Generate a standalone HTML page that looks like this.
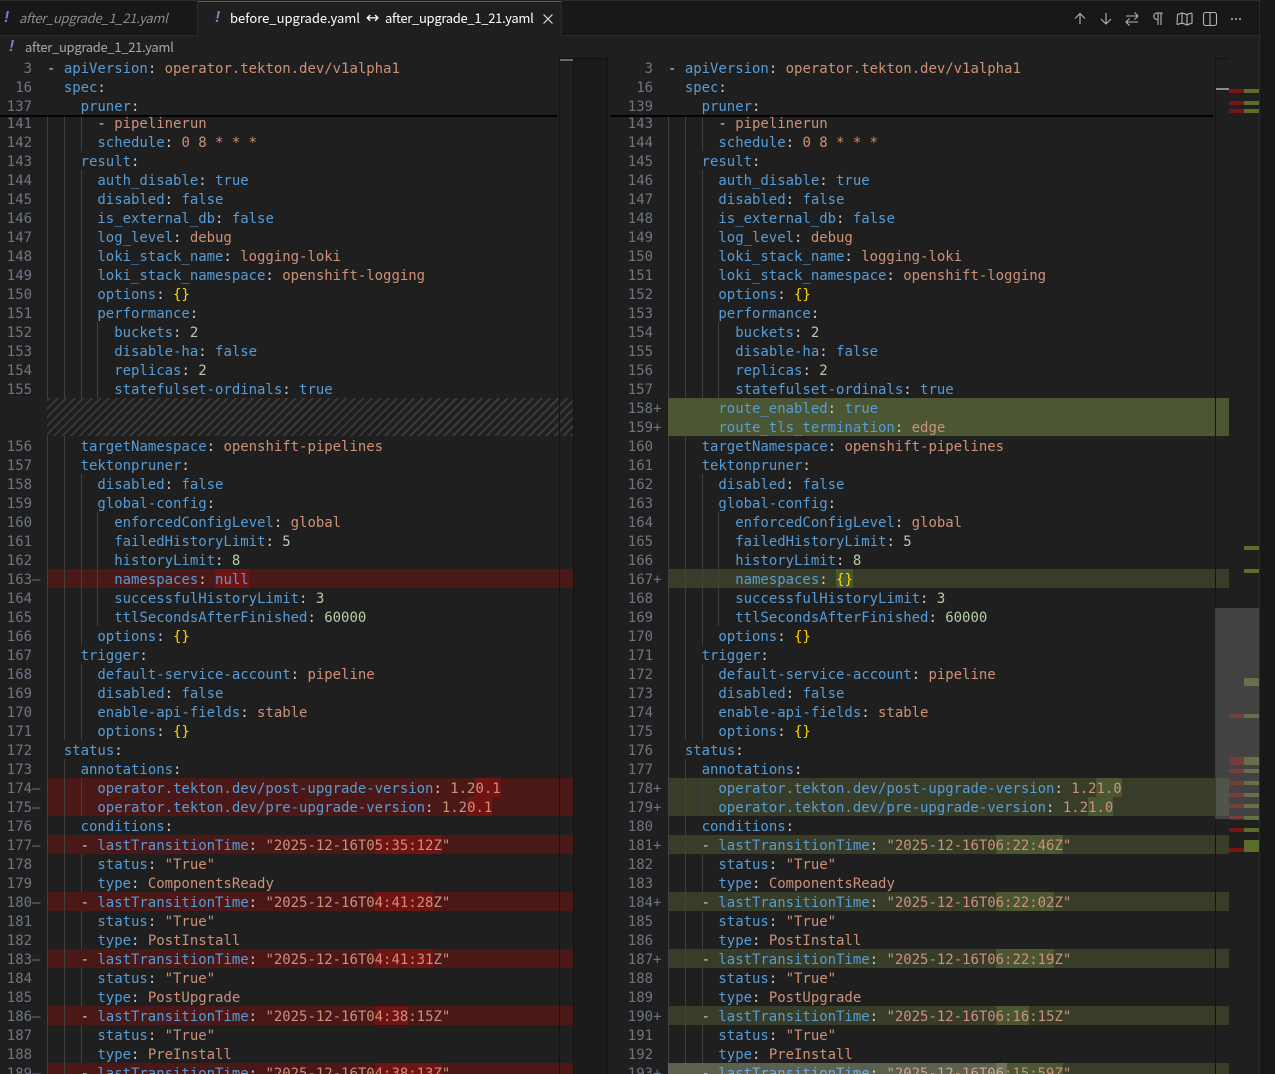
<!DOCTYPE html>
<html><head><meta charset="utf-8"><style>
html,body{margin:0;padding:0;background:#1f1f1f;width:1275px;height:1074px;overflow:hidden}
.abs,.pane,.bar{position:absolute}
#tabs{left:0;top:0;width:1259px;background:#181818;border-bottom:1px solid #2b2b2b;position:absolute;border-top:1px solid #2b2b2b;box-sizing:content-box;height:34px}
.ui{font:13px "Noto Sans CJK SC","Liberation Sans",sans-serif;white-space:pre;position:absolute;line-height:18px}
.nr{letter-spacing:-.3px}
.ex{position:absolute;color:#9b6fc4;font:italic bold 16px "Liberation Sans",sans-serif;line-height:18px}
.pane{top:113px;height:961px;overflow:hidden;font:14px/23px "DejaVu Sans Mono",monospace;letter-spacing:-.028px;color:#ccc}
.stick{position:absolute;top:58px;height:57px;overflow:hidden;background:#1f1f1f;font:14px/23px "DejaVu Sans Mono",monospace;letter-spacing:-.028px;color:#ccc}
.l{position:relative;height:19px;margin-left:47px;white-space:pre}
.l i{position:absolute;left:-47px;width:32px;text-align:right;color:#6e7681;font-style:normal}
.l em{position:absolute;left:-15px;color:#6e7681;font-style:normal}
.k{color:#569cd6}.s{color:#ce9178}.n{color:#b5cea8}.y{color:#ffd700}
.r{background-color:#4b1818}.a{background-color:#373d29}.A{background-color:#4b5632}
.R,.G{display:inline-block;height:19px;vertical-align:top}
.R{background:#6f1313}.G{background:#4b5632}
.g1,.g2,.g3,.g4{background-repeat:no-repeat;background-size:1px 19px}
.g1{background-image:linear-gradient(#404040,#404040);background-position:0 0}
.g2{background-image:linear-gradient(#404040,#404040),linear-gradient(#404040,#404040);background-position:0 0,17px 0}
.g3{background-image:linear-gradient(#404040,#404040),linear-gradient(#404040,#404040),linear-gradient(#404040,#404040);background-position:0 0,17px 0,34px 0}
.g4{background-image:linear-gradient(#404040,#404040),linear-gradient(#404040,#404040),linear-gradient(#404040,#404040),linear-gradient(#404040,#404040);background-position:0 0,17px 0,34px 0,50px 0}
.hatch{height:38px;margin-left:47px;background:repeating-linear-gradient(-45deg,#3a3a3a 0,#3a3a3a 2px,#1f1f1f 2px,#1f1f1f 6px)}
.bar{display:block}
.sh{position:absolute;top:115px;height:3px;background:linear-gradient(#000,#000 45%,rgba(0,0,0,.25) 70%,transparent)}
</style></head><body>
<div id="tabs"></div>
<div class="bar" style="left:197px;top:0;width:365px;height:36px;background:#1f1f1f;border-left:1px solid #2b2b2b;border-right:1px solid #2b2b2b;box-sizing:border-box"></div>
<div class="bar" style="left:198px;top:1px;width:363px;height:1px;background:#0078d4"></div>
<div class="bar" style="left:1259px;top:0;width:16px;height:1074px;background:#181818;border-left:1px solid #2b2b2b;box-sizing:border-box"></div>
<span class="ex" style="left:4px;top:9px">!</span>
<span class="ui nr" style="left:19px;top:9px;color:#8c8c8c;font-style:italic">after_upgrade_1_21.yaml</span>
<span class="ex" style="left:215px;top:9px">!</span>
<span class="ui" style="left:230px;top:9px;color:#ffffff">before_upgrade.yaml</span>
<span class="ui" style="left:366px;top:9px;color:#ffffff;font-family:'DejaVu Sans',sans-serif;font-size:16px">↔</span>
<span class="ui nr" style="left:385px;top:9px;color:#ffffff">after_upgrade_1_21.yaml</span>
<svg class="abs" style="left:541px;top:12px" width="14" height="14" viewBox="0 0 14 14"><path d="M2.5 2.5l9 9M11.5 2.5l-9 9" stroke="#ddd" stroke-width="1.2" fill="none"/></svg>
<span class="ex" style="left:9px;top:38px">!</span>
<span class="ui nr" style="left:25px;top:38px;color:#a9a9a9">after_upgrade_1_21.yaml</span>
<svg class="abs" style="left:1070px;top:9px" width="180" height="20" viewBox="0 0 180 20" fill="none" stroke="#b5b5b5" stroke-width="1.1">
<path d="M10 15V4.500M5 9.500l5-5 5 5"/>
<path d="M36 4v11M31 10l5 5 5-5"/>
<path d="M56 7h12M64.500 3.500L68 7l-3.500 3.500M68 13H56M59.500 9.500L56 13l3.500 3.500"/>
<path d="M91 4v12M88 4v12M93 4h-6a3.200 3.200 0 0 0 0 6.500h1"/>
<path d="M107.500 5.500l4.500-1.500 5 1.500 4.500-1.500.5.500v9.500l-5 2-5-2-4.500 1.500-.5-.5zM112 4v11M117 5.500v10.500"/>
<rect x="133.500" y="3.500" width="13" height="13" rx="2"/><path d="M140 3.500v13"/>
<path d="M161 10h2M165 10h2M169 10h2" stroke-width="1.500"/>
</svg>

<div class="pane" style="left:0;width:573px">
<div class="l g3"><i>141</i>      - <span class="s">pipelinerun</span></div>
<div class="l g3"><i>142</i>      <span class="k">schedule</span>: <span class="s">0 8 * * *</span></div>
<div class="l g2"><i>143</i>    <span class="k">result</span>:</div>
<div class="l g3"><i>144</i>      <span class="k">auth_disable</span>: <span class="k">true</span></div>
<div class="l g3"><i>145</i>      <span class="k">disabled</span>: <span class="k">false</span></div>
<div class="l g3"><i>146</i>      <span class="k">is_external_db</span>: <span class="k">false</span></div>
<div class="l g3"><i>147</i>      <span class="k">log_level</span>: <span class="s">debug</span></div>
<div class="l g3"><i>148</i>      <span class="k">loki_stack_name</span>: <span class="s">logging-loki</span></div>
<div class="l g3"><i>149</i>      <span class="k">loki_stack_namespace</span>: <span class="s">openshift-logging</span></div>
<div class="l g3"><i>150</i>      <span class="k">options</span>: <span class="y">{}</span></div>
<div class="l g3"><i>151</i>      <span class="k">performance</span>:</div>
<div class="l g4"><i>152</i>        <span class="k">buckets</span>: <span class="n">2</span></div>
<div class="l g4"><i>153</i>        <span class="k">disable-ha</span>: <span class="k">false</span></div>
<div class="l g4"><i>154</i>        <span class="k">replicas</span>: <span class="n">2</span></div>
<div class="l g4"><i>155</i>        <span class="k">statefulset-ordinals</span>: <span class="k">true</span></div>
<div class="hatch"></div>
<div class="l g2"><i>156</i>    <span class="k">targetNamespace</span>: <span class="s">openshift-pipelines</span></div>
<div class="l g2"><i>157</i>    <span class="k">tektonpruner</span>:</div>
<div class="l g3"><i>158</i>      <span class="k">disabled</span>: <span class="k">false</span></div>
<div class="l g3"><i>159</i>      <span class="k">global-config</span>:</div>
<div class="l g4"><i>160</i>        <span class="k">enforcedConfigLevel</span>: <span class="s">global</span></div>
<div class="l g4"><i>161</i>        <span class="k">failedHistoryLimit</span>: <span class="n">5</span></div>
<div class="l g4"><i>162</i>        <span class="k">historyLimit</span>: <span class="n">8</span></div>
<div class="l g4 r"><i>163</i><em>—</em>        <span class="k">namespaces</span>: <span class="R k">null</span></div>
<div class="l g4"><i>164</i>        <span class="k">successfulHistoryLimit</span>: <span class="n">3</span></div>
<div class="l g4"><i>165</i>        <span class="k">ttlSecondsAfterFinished</span>: <span class="n">60000</span></div>
<div class="l g3"><i>166</i>      <span class="k">options</span>: <span class="y">{}</span></div>
<div class="l g2"><i>167</i>    <span class="k">trigger</span>:</div>
<div class="l g3"><i>168</i>      <span class="k">default-service-account</span>: <span class="s">pipeline</span></div>
<div class="l g3"><i>169</i>      <span class="k">disabled</span>: <span class="k">false</span></div>
<div class="l g3"><i>170</i>      <span class="k">enable-api-fields</span>: <span class="s">stable</span></div>
<div class="l g3"><i>171</i>      <span class="k">options</span>: <span class="y">{}</span></div>
<div class="l g1"><i>172</i>  <span class="k">status</span>:</div>
<div class="l g2"><i>173</i>    <span class="k">annotations</span>:</div>
<div class="l g3 r"><i>174</i><em>—</em>      <span class="k">operator.tekton.dev/post-upgrade-version</span>: <span class="s">1.2<span class="R">0.1</span></span></div>
<div class="l g3 r"><i>175</i><em>—</em>      <span class="k">operator.tekton.dev/pre-upgrade-version</span>: <span class="s">1.2<span class="R">0.1</span></span></div>
<div class="l g2"><i>176</i>    <span class="k">conditions</span>:</div>
<div class="l g2 r"><i>177</i><em>—</em>    - <span class="k">lastTransitionTime</span>: <span class="s">"2025-12-16T0<span class="R">5:35:12Z</span>"</span></div>
<div class="l g3"><i>178</i>      <span class="k">status</span>: <span class="s">"True"</span></div>
<div class="l g3"><i>179</i>      <span class="k">type</span>: <span class="s">ComponentsReady</span></div>
<div class="l g2 r"><i>180</i><em>—</em>    - <span class="k">lastTransitionTime</span>: <span class="s">"2025-12-16T0<span class="R">4:41:28</span>Z"</span></div>
<div class="l g3"><i>181</i>      <span class="k">status</span>: <span class="s">"True"</span></div>
<div class="l g3"><i>182</i>      <span class="k">type</span>: <span class="s">PostInstall</span></div>
<div class="l g2 r"><i>183</i><em>—</em>    - <span class="k">lastTransitionTime</span>: <span class="s">"2025-12-16T0<span class="R">4:41:31</span>Z"</span></div>
<div class="l g3"><i>184</i>      <span class="k">status</span>: <span class="s">"True"</span></div>
<div class="l g3"><i>185</i>      <span class="k">type</span>: <span class="s">PostUpgrade</span></div>
<div class="l g2 r"><i>186</i><em>—</em>    - <span class="k">lastTransitionTime</span>: <span class="s">"2025-12-16T0<span class="R">4:38</span>:15Z"</span></div>
<div class="l g3"><i>187</i>      <span class="k">status</span>: <span class="s">"True"</span></div>
<div class="l g3"><i>188</i>      <span class="k">type</span>: <span class="s">PreInstall</span></div>
<div class="l g2 r"><i>189</i><em>—</em>    - <span class="k">lastTransitionTime</span>: <span class="s">"2025-12-16T0<span class="R">4:38:13Z</span>"</span></div>
</div>

<div class="pane" style="left:621px;width:608px">
<div class="l g3"><i>143</i>      - <span class="s">pipelinerun</span></div>
<div class="l g3"><i>144</i>      <span class="k">schedule</span>: <span class="s">0 8 * * *</span></div>
<div class="l g2"><i>145</i>    <span class="k">result</span>:</div>
<div class="l g3"><i>146</i>      <span class="k">auth_disable</span>: <span class="k">true</span></div>
<div class="l g3"><i>147</i>      <span class="k">disabled</span>: <span class="k">false</span></div>
<div class="l g3"><i>148</i>      <span class="k">is_external_db</span>: <span class="k">false</span></div>
<div class="l g3"><i>149</i>      <span class="k">log_level</span>: <span class="s">debug</span></div>
<div class="l g3"><i>150</i>      <span class="k">loki_stack_name</span>: <span class="s">logging-loki</span></div>
<div class="l g3"><i>151</i>      <span class="k">loki_stack_namespace</span>: <span class="s">openshift-logging</span></div>
<div class="l g3"><i>152</i>      <span class="k">options</span>: <span class="y">{}</span></div>
<div class="l g3"><i>153</i>      <span class="k">performance</span>:</div>
<div class="l g4"><i>154</i>        <span class="k">buckets</span>: <span class="n">2</span></div>
<div class="l g4"><i>155</i>        <span class="k">disable-ha</span>: <span class="k">false</span></div>
<div class="l g4"><i>156</i>        <span class="k">replicas</span>: <span class="n">2</span></div>
<div class="l g4"><i>157</i>        <span class="k">statefulset-ordinals</span>: <span class="k">true</span></div>
<div class="l A"><i>158</i><em>+</em>      <span class="k">route_enabled</span>: <span class="k">true</span></div>
<div class="l A"><i>159</i><em>+</em>      <span class="k">route_tls_termination</span>: <span class="s">edge</span></div>
<div class="l g2"><i>160</i>    <span class="k">targetNamespace</span>: <span class="s">openshift-pipelines</span></div>
<div class="l g2"><i>161</i>    <span class="k">tektonpruner</span>:</div>
<div class="l g3"><i>162</i>      <span class="k">disabled</span>: <span class="k">false</span></div>
<div class="l g3"><i>163</i>      <span class="k">global-config</span>:</div>
<div class="l g4"><i>164</i>        <span class="k">enforcedConfigLevel</span>: <span class="s">global</span></div>
<div class="l g4"><i>165</i>        <span class="k">failedHistoryLimit</span>: <span class="n">5</span></div>
<div class="l g4"><i>166</i>        <span class="k">historyLimit</span>: <span class="n">8</span></div>
<div class="l g4 a"><i>167</i><em>+</em>        <span class="k">namespaces</span>: <span class="G y">{}</span></div>
<div class="l g4"><i>168</i>        <span class="k">successfulHistoryLimit</span>: <span class="n">3</span></div>
<div class="l g4"><i>169</i>        <span class="k">ttlSecondsAfterFinished</span>: <span class="n">60000</span></div>
<div class="l g3"><i>170</i>      <span class="k">options</span>: <span class="y">{}</span></div>
<div class="l g2"><i>171</i>    <span class="k">trigger</span>:</div>
<div class="l g3"><i>172</i>      <span class="k">default-service-account</span>: <span class="s">pipeline</span></div>
<div class="l g3"><i>173</i>      <span class="k">disabled</span>: <span class="k">false</span></div>
<div class="l g3"><i>174</i>      <span class="k">enable-api-fields</span>: <span class="s">stable</span></div>
<div class="l g3"><i>175</i>      <span class="k">options</span>: <span class="y">{}</span></div>
<div class="l g1"><i>176</i>  <span class="k">status</span>:</div>
<div class="l g2"><i>177</i>    <span class="k">annotations</span>:</div>
<div class="l g3 a"><i>178</i><em>+</em>      <span class="k">operator.tekton.dev/post-upgrade-version</span>: <span class="s">1.2<span class="G">1.0</span></span></div>
<div class="l g3 a"><i>179</i><em>+</em>      <span class="k">operator.tekton.dev/pre-upgrade-version</span>: <span class="s">1.2<span class="G">1.0</span></span></div>
<div class="l g2"><i>180</i>    <span class="k">conditions</span>:</div>
<div class="l g2 a"><i>181</i><em>+</em>    - <span class="k">lastTransitionTime</span>: <span class="s">"2025-12-16T0<span class="G">6:22:46Z</span>"</span></div>
<div class="l g3"><i>182</i>      <span class="k">status</span>: <span class="s">"True"</span></div>
<div class="l g3"><i>183</i>      <span class="k">type</span>: <span class="s">ComponentsReady</span></div>
<div class="l g2 a"><i>184</i><em>+</em>    - <span class="k">lastTransitionTime</span>: <span class="s">"2025-12-16T0<span class="G">6:22:02</span>Z"</span></div>
<div class="l g3"><i>185</i>      <span class="k">status</span>: <span class="s">"True"</span></div>
<div class="l g3"><i>186</i>      <span class="k">type</span>: <span class="s">PostInstall</span></div>
<div class="l g2 a"><i>187</i><em>+</em>    - <span class="k">lastTransitionTime</span>: <span class="s">"2025-12-16T0<span class="G">6:22:19</span>Z"</span></div>
<div class="l g3"><i>188</i>      <span class="k">status</span>: <span class="s">"True"</span></div>
<div class="l g3"><i>189</i>      <span class="k">type</span>: <span class="s">PostUpgrade</span></div>
<div class="l g2 a"><i>190</i><em>+</em>    - <span class="k">lastTransitionTime</span>: <span class="s">"2025-12-16T0<span class="G">6:16</span>:15Z"</span></div>
<div class="l g3"><i>191</i>      <span class="k">status</span>: <span class="s">"True"</span></div>
<div class="l g3"><i>192</i>      <span class="k">type</span>: <span class="s">PreInstall</span></div>
<div class="l g2 a"><i>193</i><em>+</em>    - <span class="k">lastTransitionTime</span>: <span class="s">"2025-12-16T0<span class="G">6:15:59Z</span>"</span></div>
</div>
<div class="bar" style="left:668px;top:1063px;width:339px;height:11px;background:rgba(255,255,255,.18)"></div>

<div class="stick" style="left:0;width:557px">
<div class="l"><i>3</i>- <span class="k">apiVersion</span>: <span class="s">operator.tekton.dev/v1alpha1</span></div>
<div class="l"><i>16</i>  <span class="k">spec</span>:</div>
<div class="l"><i>137</i>    <span class="k">pruner</span>:</div>
</div>
<div class="sh" style="left:0;width:557px"></div>
<div class="stick" style="left:610px;width:603px">
<div class="l" style="margin-left:58px"><i style="left:-58px;width:43px">3</i>- <span class="k">apiVersion</span>: <span class="s">operator.tekton.dev/v1alpha1</span></div>
<div class="l" style="margin-left:58px"><i style="left:-58px;width:43px">16</i>  <span class="k">spec</span>:</div>
<div class="l" style="margin-left:58px"><i style="left:-58px;width:43px">139</i>    <span class="k">pruner</span>:</div>
</div>
<div class="sh" style="left:610px;width:603px"></div>

<div class="bar" style="left:559px;top:58px;width:1px;height:1016px;background:#141414"></div>
<div class="bar" style="left:573px;top:58px;width:35px;height:1016px;background:#1b1b1b;border-left:1px solid #141414;border-right:1px solid #141414;box-sizing:border-box"></div>
<div class="bar" style="left:559px;top:58px;width:49px;height:1px;background:#111"></div>
<div class="bar" style="left:560px;top:59px;width:13px;height:2px;background:#6a6a6a"></div>
<div class="bar" style="left:1215px;top:58px;width:1px;height:1016px;background:#141414"></div>
<div class="bar" style="left:1215px;top:58px;width:14px;height:1px;background:#111"></div>
<div class="bar" style="left:1216px;top:88px;width:13px;height:2px;background:#8c8c8c"></div>

<div class="bar" style="left:1229px;top:89px;width:15px;height:4px;background:#771414"></div>
<div class="bar" style="left:1244px;top:89px;width:15px;height:4px;background:#5b6d2a"></div>
<div class="bar" style="left:1229px;top:101px;width:15px;height:4px;background:#771414"></div>
<div class="bar" style="left:1244px;top:101px;width:15px;height:4px;background:#5b6d2a"></div>
<div class="bar" style="left:1229px;top:109px;width:15px;height:4px;background:#771414"></div>
<div class="bar" style="left:1244px;top:109px;width:15px;height:4px;background:#5b6d2a"></div>
<div class="bar" style="left:1244px;top:546px;width:15px;height:4px;background:#5b6d2a"></div>
<div class="bar" style="left:1244px;top:569px;width:15px;height:4px;background:#5b6d2a"></div>
<div class="bar" style="left:1244px;top:678px;width:15px;height:8px;background:#5b6d2a"></div>
<div class="bar" style="left:1229px;top:714px;width:15px;height:4px;background:#771414"></div>
<div class="bar" style="left:1244px;top:714px;width:15px;height:4px;background:#5b6d2a"></div>
<div class="bar" style="left:1229px;top:757px;width:15px;height:8px;background:#771414"></div>
<div class="bar" style="left:1244px;top:757px;width:15px;height:8px;background:#5b6d2a"></div>
<div class="bar" style="left:1229px;top:769px;width:15px;height:4px;background:#771414"></div>
<div class="bar" style="left:1244px;top:769px;width:15px;height:4px;background:#5b6d2a"></div>
<div class="bar" style="left:1229px;top:781px;width:15px;height:4px;background:#771414"></div>
<div class="bar" style="left:1244px;top:781px;width:15px;height:4px;background:#5b6d2a"></div>
<div class="bar" style="left:1229px;top:793px;width:15px;height:4px;background:#771414"></div>
<div class="bar" style="left:1244px;top:793px;width:15px;height:4px;background:#5b6d2a"></div>
<div class="bar" style="left:1229px;top:804px;width:15px;height:4px;background:#771414"></div>
<div class="bar" style="left:1244px;top:804px;width:15px;height:4px;background:#5b6d2a"></div>
<div class="bar" style="left:1229px;top:816px;width:15px;height:4px;background:#771414"></div>
<div class="bar" style="left:1244px;top:816px;width:15px;height:4px;background:#5b6d2a"></div>
<div class="bar" style="left:1229px;top:828px;width:15px;height:4px;background:#771414"></div>
<div class="bar" style="left:1244px;top:828px;width:15px;height:4px;background:#5b6d2a"></div>
<div class="bar" style="left:1229px;top:848px;width:15px;height:4px;background:#771414"></div>
<div class="bar" style="left:1244px;top:840px;width:15px;height:12px;background:#5b6d2a"></div>
<div class="bar" style="left:1215px;top:608px;width:44px;height:211px;background:rgba(121,121,121,.4)"></div>
</body></html>
